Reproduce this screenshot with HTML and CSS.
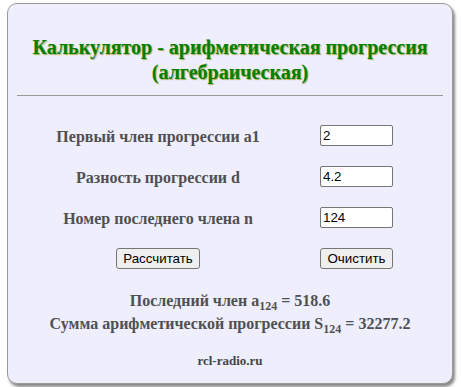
FILE: index.html
```html
<!DOCTYPE html>
<html lang="ru">
<head>
  <meta charset="UTF-8" />
  <title>Калькулятор - арифметическая прогрессия</title>
  <link rel="stylesheet" href="styles.css">
</head>
<body>
  <div class="card">
    <h1>Калькулятор - арифметическая прогрессия (алгебраическая)</h1>
    <hr />

    <form class="calc" onsubmit="return false">
      <label for="a1">Первый член прогрессии a1</label>
      <div class="cell"><input type="text" id="a1" value="2" /></div>

      <label for="d">Разность прогрессии d</label>
      <div class="cell"><input type="text" id="d" value="4.2" /></div>

      <label for="n">Номер последнего члена n</label>
      <div class="cell"><input type="text" id="n" value="124" /></div>

      <div class="center"><button type="button">Рассчитать</button></div>
      <div class="cell"><button type="reset">Очистить</button></div>
    </form>

    <div class="result">
      <div>Последний член a<sub>124</sub> = 518.6</div>
      <div>Сумма арифметической прогрессии S<sub>124</sub> = 32277.2</div>
    </div>

    <div class="footer">rcl-radio.ru</div>
  </div>
</body>
</html>
```

FILE: styles.css
```css
body {
  margin: 0;
  background: #fff;
  font-family: "Liberation Serif", "Times New Roman", serif;
}
.card {
  margin: 3px 7px;
  width: 426px;
  padding: 31px 9px 14px;
  background-color: #eeeefd;
  border: 1px solid #999;
  border-radius: 10px;
  box-shadow: 2px 3px 3px #888;
}
h1 {
  margin: 0;
  text-align: center;
  font-size: 20px;
  line-height: 25px;
  color: #008000;
  text-shadow: 1px 1px 1px #a8a860;
}
hr {
  margin: 10px 0 0;
  border: 0;
  border-top: 1px solid #999;
}
.calc {
  display: grid;
  grid-template-columns: 282px 116px;
  grid-auto-rows: 21px;
  row-gap: 20px;
  margin-top: 29px;
}
label, .center {
  display: flex;
  align-items: center;
  justify-content: center;
}
label {
  font-weight: bold;
  font-size: 16px;
  color: #505050;
  padding-top: 3px;
}
.cell {
  display: flex;
  align-items: center;
  padding-left: 21px;
}
input {
  width: 73px;
  height: 21px;
  box-sizing: border-box;
  padding: 1px 2px;
  font-family: "Liberation Sans", Arial, sans-serif;
  font-size: 13.33px;
  border: 1px solid #767676;
  border-radius: 2px;
}
button {
  height: 21px;
  padding: 1px 6px;
  font-family: "Liberation Sans", Arial, sans-serif;
  font-size: 13.33px;
  background-color: #efefef;
  border: 1px solid #767676;
  border-radius: 3px;
  color: #000;
}
.cell button {
  width: 73px;
}
.result {
  margin-top: 20px;
  text-align: center;
  font-weight: bold;
  font-size: 16px;
  line-height: 23px;
  color: #505050;
}
sub {
  font-size: 12px;
  line-height: 0;
}
.footer {
  margin-top: 18px;
  text-align: center;
  font-weight: bold;
  font-size: 13px;
  line-height: 16px;
  color: #444;
}
```
